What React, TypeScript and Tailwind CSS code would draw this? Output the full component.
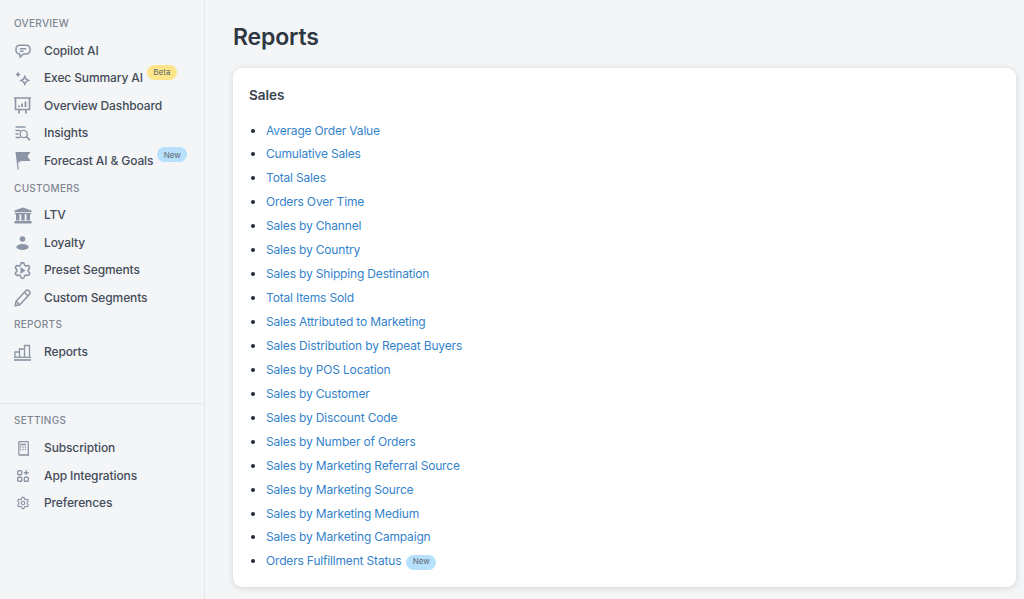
import React from "react";
import { Settings } from "lucide-react";

const ICON = "text-[#8b95a5]";

const Copilot = () => (
  <svg width="16" height="15" viewBox="0 0 16 15" fill="none" stroke="currentColor" strokeWidth="1.500" className={ICON}>
    <path d="M4.500 1.200h7a3.500 3.500 0 0 1 3.500 3.500v1.800a3.500 3.500 0 0 1-3.500 3.500H8.500l-3.300 3 -.5-3A3.600 3.600 0 0 1 1 6.500V4.700a3.500 3.500 0 0 1 3.500-3.500z" />
    <path d="M4.800 4.800h6.400M4.800 7.200h3.800" />
  </svg>
);

const Sparkle = () => (
  <svg width="15" height="15" viewBox="0 0 15 15" fill="none" className={ICON}>
    <path d="M3 0.800l1 1.700 1.700 1-1.700 1-1 1.700-1-1.700-1.700-1 1.700-1z" fill="currentColor" />
    <path d="M9.800 5.500l1.300 2.600 2.600 1.300-2.600 1.300-1.300 2.600-1.300-2.600-2.600-1.300 2.600-1.300z" stroke="currentColor" strokeWidth="1.500" />
  </svg>
);

const Dashboard = () => (
  <svg width="17" height="18" viewBox="0 0 17 18" fill="none" stroke="currentColor" strokeWidth="1.600" className={ICON}>
    <path d="M0 1h17M1.500 1v11.500h14V1M5.500 12.500l-.8 4M11.500 12.500l.8 4" />
    <path d="M5 10V8.500M8 10V6.500M11.500 10V4.500" strokeWidth="1.800" />
  </svg>
);

const Insights = () => (
  <svg width="16" height="15" viewBox="0 0 16 15" fill="none" stroke="currentColor" strokeWidth="1.400" className={ICON}>
    <path d="M0.500 1h10M0.500 4.500h5M0.500 8h3M0.500 11.500h5" />
    <circle cx="8.700" cy="8" r="3.600" />
    <path d="M11.300 10.500l3.500 3.700" strokeWidth="1.800" />
  </svg>
);

const Flag = () => (
  <svg width="16" height="19" viewBox="0 0 16 19" fill="currentColor" className={ICON}>
    <path d="M0.500 1h15l-3 4.300 3 4.700H5.300v1.200H3l.8 7.300H2.600z" />
  </svg>
);

const Bank = () => (
  <svg width="18" height="17" viewBox="0 0 18 17" fill="currentColor" className={ICON}>
    <path d="M9 0.500 17.500 3.600v1.400H.5V3.600z" />
    <path d="M.8 5.800h16.400v1.500H.8zM2 7.300h3.500v6.200H2zM7.300 7.300h3.400v6.200H7.300zM12.500 7.300H16v6.200h-3.500zM.5 14h17v2.500H.5z" />
  </svg>
);

const Person = () => (
  <svg width="13" height="14" viewBox="0 0 13 14" fill="currentColor" className={ICON}>
    <circle cx="6.500" cy="3" r="2.800" />
    <ellipse cx="6.500" cy="11" rx="6.200" ry="3" />
  </svg>
);

const GearPlay = () => (
  <span className={`relative flex ${ICON}`}>
    <Settings size={19} strokeWidth={2} className="[&>circle]:hidden" />
    <svg width="6" height="7" viewBox="0 0 6 7" fill="currentColor" className="absolute left-[7px] top-[6px]">
      <path d="M0.500 0 5.500 3.500 .5 7z" />
    </svg>
  </span>
);

const EditPencil = () => (
  <svg width="17" height="18" viewBox="0 0 17 18" fill="none" stroke="currentColor" strokeWidth="1.500" strokeLinejoin="round" className={ICON}>
    <path d="M1.200 16.800l.9-4.600L11.800 1.700a1.900 1.900 0 0 1 2.700-.1l1 1a1.900 1.900 0 0 1 0 2.700L5.800 15.700z" />
    <path d="M2.100 12.200l3.700 3.500M10.300 3.300l3.700 3.600" />
  </svg>
);

const Bars = () => (
  <svg width="17" height="17" viewBox="0 0 17 17" fill="none" stroke="currentColor" strokeWidth="1.300" className={ICON}>
    <path d="M1 13V8h4.500V13M5.500 13V5h5V13M10.500 13V1.500H15.500V13" />
    <path d="M0 13.300h17" />
    <path d="M0 16h17" strokeWidth="1.700" />
  </svg>
);

const Receipt = () => (
  <svg width="12" height="15" viewBox="0 0 12 15" fill="none" stroke="currentColor" strokeWidth="1.300" className={ICON}>
    <path d="M1.500 .7h9a.8.8 0 0 1 .8.800v12.900l-1.400-.8-1.400.8-1.400-.8-1.100.8-1.400-.8-1.400.8-1.400-.8V1.500a.8.8 0 0 1 .8-.8z" />
    <path d="M3 3.500h6M3 6h1.200M5.400 6h1.200M7.800 6H9M3 8.500h1.200M5.400 8.500h1.200M7.800 8.500H9" />
  </svg>
);

const Apps = () => (
  <svg width="12" height="12" viewBox="0 0 12 12" fill="none" stroke="currentColor" strokeWidth="1.400" className={ICON}>
    <rect x=".7" y=".7" width="4" height="4" rx=".9" />
    <rect x=".7" y="7.300" width="4" height="4" rx=".9" />
    <rect x="7.300" y="7.300" width="4" height="4" rx=".9" />
    <path d="M9.300 .3v4.800M6.900 2.700h4.800" />
  </svg>
);

type Item = { label: string; icon: React.ReactNode; badge?: string };

const overview: Item[] = [
  { label: "Copilot AI", icon: <Copilot /> },
  { label: "Exec Summary AI", icon: <Sparkle />, badge: "Beta" },
  { label: "Overview Dashboard", icon: <Dashboard /> },
  { label: "Insights", icon: <Insights /> },
  { label: "Forecast AI & Goals", icon: <Flag />, badge: "New" },
];

const customers: Item[] = [
  { label: "LTV", icon: <Bank /> },
  { label: "Loyalty", icon: <Person /> },
  { label: "Preset Segments", icon: <GearPlay /> },
  { label: "Custom Segments", icon: <EditPencil /> },
];

const settings: Item[] = [
  { label: "Subscription", icon: <Receipt /> },
  { label: "App Integrations", icon: <Apps /> },
  { label: "Preferences", icon: <Settings size={14} strokeWidth={2} className={ICON} /> },
];

const salesReports = [
  "Average Order Value",
  "Cumulative Sales",
  "Total Sales",
  "Orders Over Time",
  "Sales by Channel",
  "Sales by Country",
  "Sales by Shipping Destination",
  "Total Items Sold",
  "Sales Attributed to Marketing",
  "Sales Distribution by Repeat Buyers",
  "Sales by POS Location",
  "Sales by Customer",
  "Sales by Discount Code",
  "Sales by Number of Orders",
  "Sales by Marketing Referral Source",
  "Sales by Marketing Source",
  "Sales by Marketing Medium",
  "Sales by Marketing Campaign",
];

const Heading = ({ children }: { children: React.ReactNode }) => (
  <div className="flex h-[27.4px] items-center pl-[14px] text-[10px] font-medium tracking-[0.3px] text-[#7d8794]">
    {children}
  </div>
);

const NavRow = ({ item }: { item: Item }) => (
  <div className="flex h-[27.4px] items-center">
    <span className="flex w-[44px] shrink-0 items-center justify-center pl-[1px]">{item.icon}</span>
    <span className="text-[12px] font-medium tracking-[-0.12px] text-[#434c59]">{item.label}</span>
    {item.badge === "Beta" && (
      <span className="relative ml-[4px] -top-[6px] flex h-[15px] w-[30px] items-center justify-center rounded-full bg-[#fde68a] text-[8px] text-[#5f6670]">
        Beta
      </span>
    )}
    {item.badge === "New" && (
      <span className="relative ml-[4px] -top-[6px] flex h-[15px] w-[30px] items-center justify-center rounded-full bg-[#b6e0fb] text-[8px] text-[#5f6670]">
        New
      </span>
    )}
  </div>
);

export default function App() {
  return (
    <div className="flex h-[599px] w-[1024px] overflow-hidden bg-[#f4f5f7] font-['Inter',sans-serif]">
      <aside className="flex w-[205px] shrink-0 flex-col border-r border-[#e6e8eb] pt-[10px]">
        <Heading>OVERVIEW</Heading>
        {overview.map((item) => (
          <NavRow key={item.label} item={item} />
        ))}
        <Heading>CUSTOMERS</Heading>
        {customers.map((item) => (
          <NavRow key={item.label} item={item} />
        ))}
        <Heading>REPORTS</Heading>
        <NavRow item={{ label: "Reports", icon: <Bars /> }} />
        <div className="mt-[37px] border-t border-[#e3e5e8] pt-[3px]">
          <Heading>SETTINGS</Heading>
          {settings.map((item) => (
            <NavRow key={item.label} item={item} />
          ))}
        </div>
      </aside>

      <main className="min-w-0 flex-1 pl-[28px] pr-[8px]">
        <h1 className="mt-[21px] text-[23px] font-semibold leading-[32px] tracking-[-0.15px] text-[#2f3742]">Reports</h1>
        <section className="mt-[15px] h-[519px] rounded-[9px] bg-white pl-[16px] pt-[17px] shadow-[0_1px_6px_rgba(0,0,0,0.14)]">
          <h2 className="text-[13.500px] font-semibold leading-[20px] text-[#3a424e]">Sales</h2>
          <ul className="mt-[13.500px] list-disc pl-[17px] marker:text-[#1f2937]">
            {salesReports.map((label) => (
              <li key={label} className="h-[23.940px] text-[12px] leading-[23.940px] tracking-[-0.17px] text-[#3483cb]">
                {label}
              </li>
            ))}
            <li className="h-[23.940px] text-[12px] leading-[23.940px] tracking-[-0.17px] text-[#3483cb]">
              Orders Fulfillment Status
              <span className="relative ml-[5px] -top-[1px] inline-flex h-[15px] w-[30px] items-center justify-center rounded-full bg-[#b6e0fb] text-[8px] tracking-normal text-[#5f6670]">
                New
              </span>
            </li>
          </ul>
        </section>
      </main>
    </div>
  );
}
